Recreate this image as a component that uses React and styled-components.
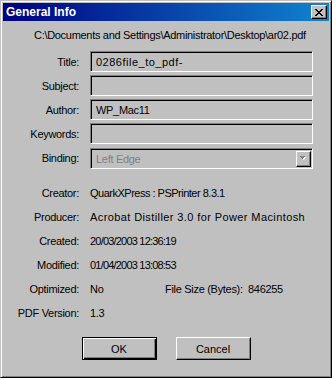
import React from "react";
import styled, { createGlobalStyle } from "styled-components";

const GlobalStyle = createGlobalStyle`
  * {
    box-sizing: border-box;
  }
  body {
    margin: 0;
    background: #c0c0c0;
    font-family: "Liberation Sans", Arial, sans-serif;
    font-size: 11px;
    color: #000;
  }
`;

const Window = styled.div`
  width: 332px;
  height: 378px;
  background: #c0c0c0;
  border: 1px solid;
  border-color: #c0c0c0 #000 #000 #c0c0c0;
  box-shadow: inset 1px 1px #fff, inset -1px -1px #808080;
  padding: 2px;
  display: flex;
  flex-direction: column;
`;

const TitleBar = styled.div`
  height: 18px;
  flex: none;
  display: flex;
  align-items: center;
  justify-content: space-between;
  padding: 0 2px 0 3px;
  background: linear-gradient(to right, #000080, #1084d0);
`;

const TitleText = styled.span`
  color: #fff;
  font-weight: bold;
  font-size: 12px;
`;

const CloseButton = styled.div`
  width: 16px;
  height: 14px;
  background: #c0c0c0;
  border: 1px solid;
  border-color: #fff #000 #000 #fff;
  box-shadow: inset -1px -1px #808080;
  display: flex;
  align-items: center;
  justify-content: center;
  padding-right: 1px;
`;

const PathLine = styled.div`
  margin-top: 7px;
  padding-left: 31px;
  line-height: 14px;
  letter-spacing: -0.3px;
  white-space: nowrap;
`;

const FieldGrid = styled.div`
  margin-top: 9px;
  display: grid;
  grid-template-columns: 76px 223px;
  column-gap: 11px;
  row-gap: 3px;
  grid-auto-rows: 21px;
  align-items: center;
`;

const Label = styled.div`
  text-align: right;
  letter-spacing: -0.3px;
  white-space: nowrap;
`;

const Field = styled.div`
  height: 21px;
  border: 1px solid;
  border-color: #808080 #fff #fff #808080;
  box-shadow: inset 1px 1px #000;
  padding: 0 4px 0 5px;
  display: flex;
  align-items: center;
  letter-spacing: ${({ tracking = -0.3 }) => tracking}px;
  color: ${({ disabled }) => (disabled ? "#808080" : "#000")};
  white-space: nowrap;
  overflow: hidden;
`;

const SelectField = styled(Field)`
  justify-content: space-between;
  padding-right: 1px;
  margin-top: 2px;
`;

const DropButton = styled.div`
  width: 15px;
  height: 16px;
  border: 1px solid;
  border-color: #fff #000 #000 #fff;
  box-shadow: inset -1px -1px #808080;
  display: flex;
  align-items: center;
  justify-content: center;
`;

const InfoGrid = styled.div`
  margin-top: 13px;
  display: grid;
  grid-template-columns: 76px 223px;
  column-gap: 11px;
  grid-auto-rows: 24px;
  align-items: center;
`;

const Value = styled.div`
  letter-spacing: ${({ tracking = -0.3 }) => tracking}px;
  white-space: nowrap;
  display: flex;
`;

const Cell = styled.span`
  width: ${({ w }) => (w ? `${w}px` : "auto")};
  flex: none;
`;

const ButtonRow = styled.div`
  margin-top: 12px;
  display: flex;
  justify-content: center;
  gap: 19px;
`;

const Button = styled.div`
  width: 75px;
  height: 23px;
  display: flex;
  align-items: center;
  justify-content: center;
  background: #c0c0c0;
  border: 1px solid;
  border-color: ${({ primary }) => (primary ? "#000" : "#fff #000 #000 #fff")};
  box-shadow: ${({ primary }) =>
    primary
      ? "inset 1px 1px #fff, inset -1px -1px #000, inset -2px -2px #808080"
      : "inset -1px -1px #808080"};
`;

const fields = [
  ["Title:", "0286file_to_pdf-", 0.5],
  ["Subject:", ""],
  ["Author:", "WP_Mac11"],
  ["Keywords:", ""],
];

const info = [
  ["Creator:", "QuarkXPress : PSPrinter 8.3.1", -0.5],
  ["Producer:", "Acrobat Distiller 3.0 for Power Macintosh", 0.4],
  ["Created:", "20/03/2003 12:36:19", -0.8],
  ["Modified:", "01/04/2003 13:08:53", -0.8],
];

export default function App() {
  return (
    <>
      <GlobalStyle />
      <Window>
        <TitleBar>
          <TitleText>General Info</TitleText>
          <CloseButton>
            <svg width="8" height="7" viewBox="0 0 8 7">
              <path
                d="M0 0h2v1h1v1h2V1h1V0h2v1H7v1H6v1H5v1h1v1h1v1h1v1H6V6H5V5H3v1H2v1H0V6h1V5h1V4h1V3H2V2H1V1H0z"
                fill="#000"
              />
            </svg>
          </CloseButton>
        </TitleBar>

        <PathLine>C:\Documents and Settings\Administrator\Desktop\ar02.pdf</PathLine>

        <FieldGrid>
          {fields.map(([label, value, tracking]) => (
            <React.Fragment key={label}>
              <Label>{label}</Label>
              <Field tracking={tracking}>{value}</Field>
            </React.Fragment>
          ))}
          <Label>Binding:</Label>
          <SelectField disabled>
            <span>Left Edge</span>
            <DropButton>
              <svg width="7" height="5" viewBox="0 0 7 5">
                <path d="M1 1h5v1H5v1H4v1H3V3H2V2H1z" fill="#fff" />
                <path d="M0 0h5v1H4v1H3v1H2V2H1V1H0z" fill="#808080" />
              </svg>
            </DropButton>
          </SelectField>
        </FieldGrid>

        <InfoGrid>
          {info.map(([label, value, tracking]) => (
            <React.Fragment key={label}>
              <Label>{label}</Label>
              <Value tracking={tracking}>{value}</Value>
            </React.Fragment>
          ))}
          <Label>Optimized:</Label>
          <Value>
            <Cell w={75}>No</Cell>
            <Cell w={83}>File Size (Bytes):</Cell>
            <Cell>846255</Cell>
          </Value>
          <Label>PDF Version:</Label>
          <Value>1.3</Value>
        </InfoGrid>

        <ButtonRow>
          <Button primary>OK</Button>
          <Button>Cancel</Button>
        </ButtonRow>
      </Window>
    </>
  );
}
